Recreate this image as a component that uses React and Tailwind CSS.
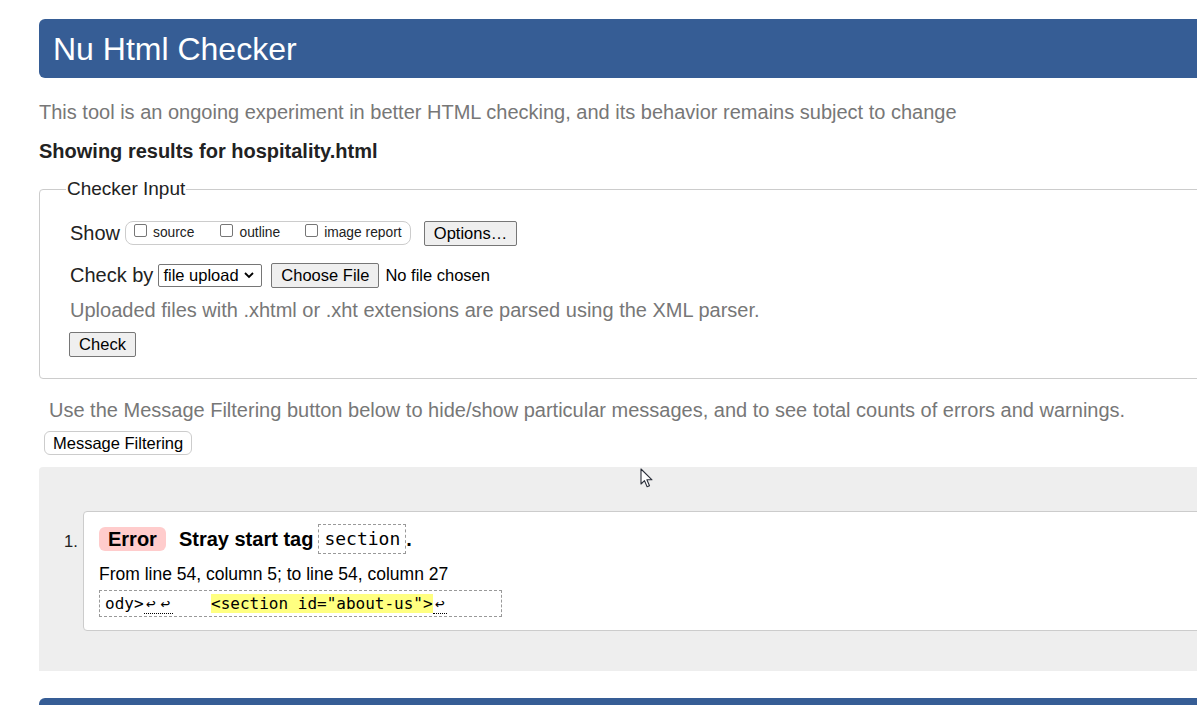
import React from 'react';

const Box = () => (
    <span className="inline-block w-[13px] h-[13px] border border-[#767676] rounded-[2px] bg-white mr-[6px] translate-y-[-3px]" />
);

const Btn = ({ children, className = '' }) => (
    <span className={`inline-flex items-center justify-center h-[25px] px-[6px] whitespace-nowrap bg-[#efefef] border border-[#767676] rounded-[2px] text-[16.5px] text-black ${className}`}>
        {children}
    </span>
);

const Ret = () => <span className="inline-block w-[14.5px] text-center">↩</span>;

export default function App() {
    return (
        <div className="relative w-[1197px] h-[705px] overflow-hidden bg-white font-['Liberation_Sans',Arial,sans-serif] text-[#222]">
            <div className="ml-[39px] w-[1220px] pt-[19px]">
                <header className="h-[59px] bg-[#365d95] rounded-l-[6px] pl-[14px] flex items-center text-white text-[32px] leading-none">
                    Nu Html Checker
                </header>

                <p className="mt-[22px] text-[20px] leading-[24px] text-[#777]">
                    This tool is an ongoing experiment in better HTML checking, and its behavior remains subject to change
                </p>
                <p className="mt-[15px] text-[20px] leading-[24px] font-bold">Showing results for hospitality.html</p>

                <fieldset className="mt-[15px] border border-[#ccc] rounded-[4px] pl-[30px] pr-4 pb-[21px]">
                    <legend className="ml-[-4px] px-[1px] text-[19px] leading-[22px]">Checker Input</legend>

                    <div className="mt-[20px] h-[26px] flex items-center">
                        <span className="text-[20px]">Show</span>
                        <div className="ml-[5px] h-[24px] w-[286px] border border-[#ccc] rounded-[8px] flex items-center pl-[8px] text-[13.8px]">
                            <span className="flex items-center"><Box />source</span>
                            <span className="flex items-center ml-[26px]"><Box />outline</span>
                            <span className="flex items-center ml-[25px]"><Box />image report</span>
                        </div>
                        <Btn className="ml-[13px] w-[93px]">Options…</Btn>
                    </div>

                    <div className="mt-[17px] h-[24px] flex items-center">
                        <span className="text-[20px]">Check by</span>
                        <span className="ml-[5px] h-[23px] w-[104px] border border-[#767676] rounded-[2px] flex items-center pl-[4px] text-[16.5px] text-black">
                            file upload
                            <svg className="ml-[5px]" width="10" height="7" viewBox="0 0 10 7" fill="none" stroke="#000" strokeWidth="1.8">
                                <path d="M1 1l4 4 4-4" />
                            </svg>
                        </span>
                        <Btn className="ml-[9px] w-[108px]">Choose File</Btn>
                        <span className="ml-[6px] text-[16.5px] text-black">No file chosen</span>
                    </div>

                    <p className="mt-[11px] text-[20px] leading-[24px] text-[#777]">
                        Uploaded files with .xhtml or .xht extensions are parsed using the XML parser.
                    </p>
                    <Btn className="mt-[10px] ml-[-1px] w-[67px]">Check</Btn>
                </fieldset>

                <p className="mt-[19px] ml-[10px] text-[20px] leading-[24px] text-[#777]">
                    Use the Message Filtering button below to hide/show particular messages, and to see total counts of errors and warnings.
                </p>
                <span className="mt-[9px] ml-[5px] inline-flex items-center h-[24px] px-[8px] border border-[#ccc] rounded-[6px] bg-white text-[16.5px] text-black">
                    Message Filtering
                </span>

                <section className="mt-[11px] h-[204px] bg-[#eee] rounded-tl-[4px] pt-[44px]">
                    <ol className="flex items-start">
                        <span className="w-[44px] pl-[25px] pt-[18px] text-[16.5px]">1.</span>
                        <li className="flex-1 bg-white border border-[#ccc] rounded-l-[4px] pl-[15px] pt-[12px] pb-[13px]">
                            <div className="flex items-center h-[30px]">
                                <span className="h-[24px] px-[9px] bg-[#fcc] rounded-[6px] flex items-center text-[20px] font-bold text-black">Error</span>
                                <span className="ml-[13px] text-[20px] font-bold text-black">Stray start tag</span>
                                <code className="ml-[5px] h-[30px] px-[5px] border border-dashed border-[#999] flex items-center font-['DejaVu_Sans_Mono',monospace] text-[18px] text-black">section</code>
                                <span className="text-[20px] font-bold text-black">.</span>
                            </div>
                            <p className="mt-[9px] text-[17.5px] leading-[22px] text-black">From line 54, column 5; to line 54, column 27</p>
                            <div className="mt-[5px] w-[403px] h-[27px] border border-dashed border-[#999] pl-[5px] font-['DejaVu_Sans_Mono',monospace] text-[16px] leading-[25px] text-black whitespace-pre">
                                ody&gt;<span className="border-b border-dotted border-black"><Ret /><Ret /></span>{'    '}<mark className="bg-[#ffff80] text-black">&lt;section id="about-us"&gt;</mark><span className="border-b border-dotted border-black"><Ret /></span>
                            </div>
                        </li>
                    </ol>
                </section>

                <footer className="mt-[27px] h-[40px] bg-[#365d95] rounded-tl-[6px]" />
            </div>

            <svg className="absolute left-[640px] top-[468px]" width="14" height="21" viewBox="0 0 14 21">
                <path d="M1 1v15l3.5-3.4 2.6 6.2 2.4-1-2.6-6H12z" fill="#fff" stroke="#2b2f3a" strokeWidth="1.1" strokeLinejoin="round" />
            </svg>
        </div>
    );
}
